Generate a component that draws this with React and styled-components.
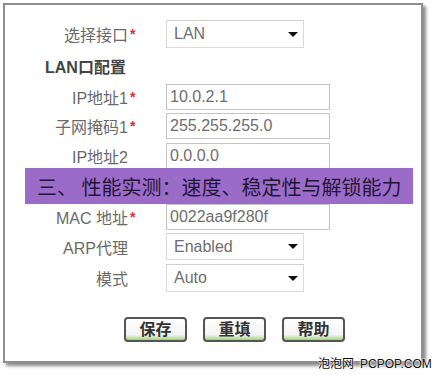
import styled, { createGlobalStyle } from "styled-components";

const GlobalStyle = createGlobalStyle`
  html, body {
    margin: 0;
    padding: 0;
    background: #fff;
  }
  body {
    font-family: "Liberation Sans", "Noto Sans CJK SC", sans-serif;
  }
`;

const Page = styled.div`
  position: relative;
  width: 438px;
  height: 375px;
  overflow: hidden;
  padding-top: 3px;
  padding-left: 3px;
  box-sizing: border-box;
`;

const Frame = styled.div`
  width: 420px;
  height: 360px;
  box-sizing: border-box;
  border: 2px solid #8e8e8e;
  background: #fff;
  box-shadow: 3px 3px 3px rgba(0, 0, 0, 0.45);
  padding-top: 15px;
  display: flex;
  flex-direction: column;
`;

const Row = styled.div`
  display: flex;
  align-items: center;
  height: ${(p) => p.$h || 26}px;
  margin-top: ${(p) => p.$mt || 0}px;
`;

const Label = styled.span`
  width: 123px;
  text-align: right;
  font-size: 16px;
  color: #6a6a6a;
  white-space: nowrap;
`;

const Star = styled.span`
  width: 12px;
  padding-left: 2px;
  box-sizing: border-box;
  color: #d83030;
  font-size: 14px;
  font-weight: bold;
  margin-right: 26px;
`;

const Heading = styled.div`
  height: 20px;
  margin-top: 10px;
  padding-left: 40px;
  font-size: 16px;
  font-weight: bold;
  color: #444;
  line-height: 20px;
`;

const TextInput = styled.input`
  width: 164px;
  height: 26px;
  box-sizing: border-box;
  border: 1px solid #c4c4c4;
  padding: 0 3px;
  font-family: "Liberation Sans", sans-serif;
  font-size: 16px;
  color: #6e6e6e;
  background: #fff;
  outline: none;
`;

const SelectBox = styled.div`
  width: 138px;
  height: ${(p) => p.$h || 28}px;
  box-sizing: border-box;
  border: 1px solid #dadada;
  border-top-color: #cfcfcf;
  display: flex;
  align-items: center;
  justify-content: space-between;
  padding: 0 5px 0 7px;
  font-size: 16px;
  color: #6e6e6e;
`;

const Caret = styled.span`
  width: 0;
  height: 0;
  border-left: 5px solid transparent;
  border-right: 5px solid transparent;
  border-top: 5px solid #111;
`;

const Buttons = styled.div`
  display: flex;
  gap: 16px;
  margin-top: 25px;
  padding-left: 119px;
`;

const Button = styled.button`
  width: 63px;
  height: 25px;
  box-sizing: border-box;
  border: 2px solid #555;
  border-radius: 4px;
  background: linear-gradient(#fff 0%, #f4f4f4 75%, #c8e6b0 88%, #9bd27a 100%);
  font-family: "Liberation Sans", "Noto Sans CJK SC", sans-serif;
  font-size: 16px;
  font-weight: bold;
  color: #333;
  padding: 0;
  line-height: 20px;
`;

const Banner = styled.div`
  position: absolute;
  left: 25px;
  top: 168px;
  width: 388px;
  height: 36px;
  background: #9b6bc8;
  color: #24163a;
  font-size: 20px;
  line-height: 38px;
  padding-left: 12px;
  box-sizing: border-box;
  white-space: nowrap;
  font-family: "Noto Sans CJK SC", sans-serif;
`;

const Watermark = styled.div`
  position: absolute;
  left: 318px;
  top: 356px;
  font-size: 12px;
  line-height: 16px;
  color: #111;
  white-space: nowrap;
  text-shadow: 0 0 2px #fff, 0 0 2px #fff;
`;

const Site = styled.span`
  margin-left: 6px;
`;

const Field = ({ label, star, mt, h, children }) => (
  <Row $mt={mt} $h={h}>
    <Label>{label}</Label>
    <Star>{star ? "*" : ""}</Star>
    {children}
  </Row>
);

const Select = ({ value, h }) => (
  <SelectBox $h={h}>
    <span>{value}</span>
    <Caret />
  </SelectBox>
);

export default function App() {
  return (
    <>
      <GlobalStyle />
      <Page>
        <Frame>
          <Field label="选择接口" star h={28}>
            <Select value="LAN" h={28} />
          </Field>
          <Heading>LAN口配置</Heading>
          <Field label="IP地址1" star mt={6}>
            <TextInput readOnly value="10.0.2.1" />
          </Field>
          <Field label="子网掩码1" star mt={3}>
            <TextInput readOnly value="255.255.255.0" />
          </Field>
          <Field label="IP地址2" mt={4}>
            <TextInput readOnly value="0.0.0.0" />
          </Field>
          <Field label="MAC 地址" star mt={35}>
            <TextInput readOnly value="0022aa9f280f" />
          </Field>
          <Field label="ARP代理" mt={3} h={27}>
            <Select value="Enabled" h={27} />
          </Field>
          <Field label="模式" mt={4} h={28}>
            <Select value="Auto" h={28} />
          </Field>
          <Buttons>
            <Button>保存</Button>
            <Button>重填</Button>
            <Button>帮助</Button>
          </Buttons>
        </Frame>
        <Banner>三、 性能实测：速度、稳定性与解锁能力</Banner>
        <Watermark>
          泡泡网<Site>PCPOP.COM</Site>
        </Watermark>
      </Page>
    </>
  );
}
